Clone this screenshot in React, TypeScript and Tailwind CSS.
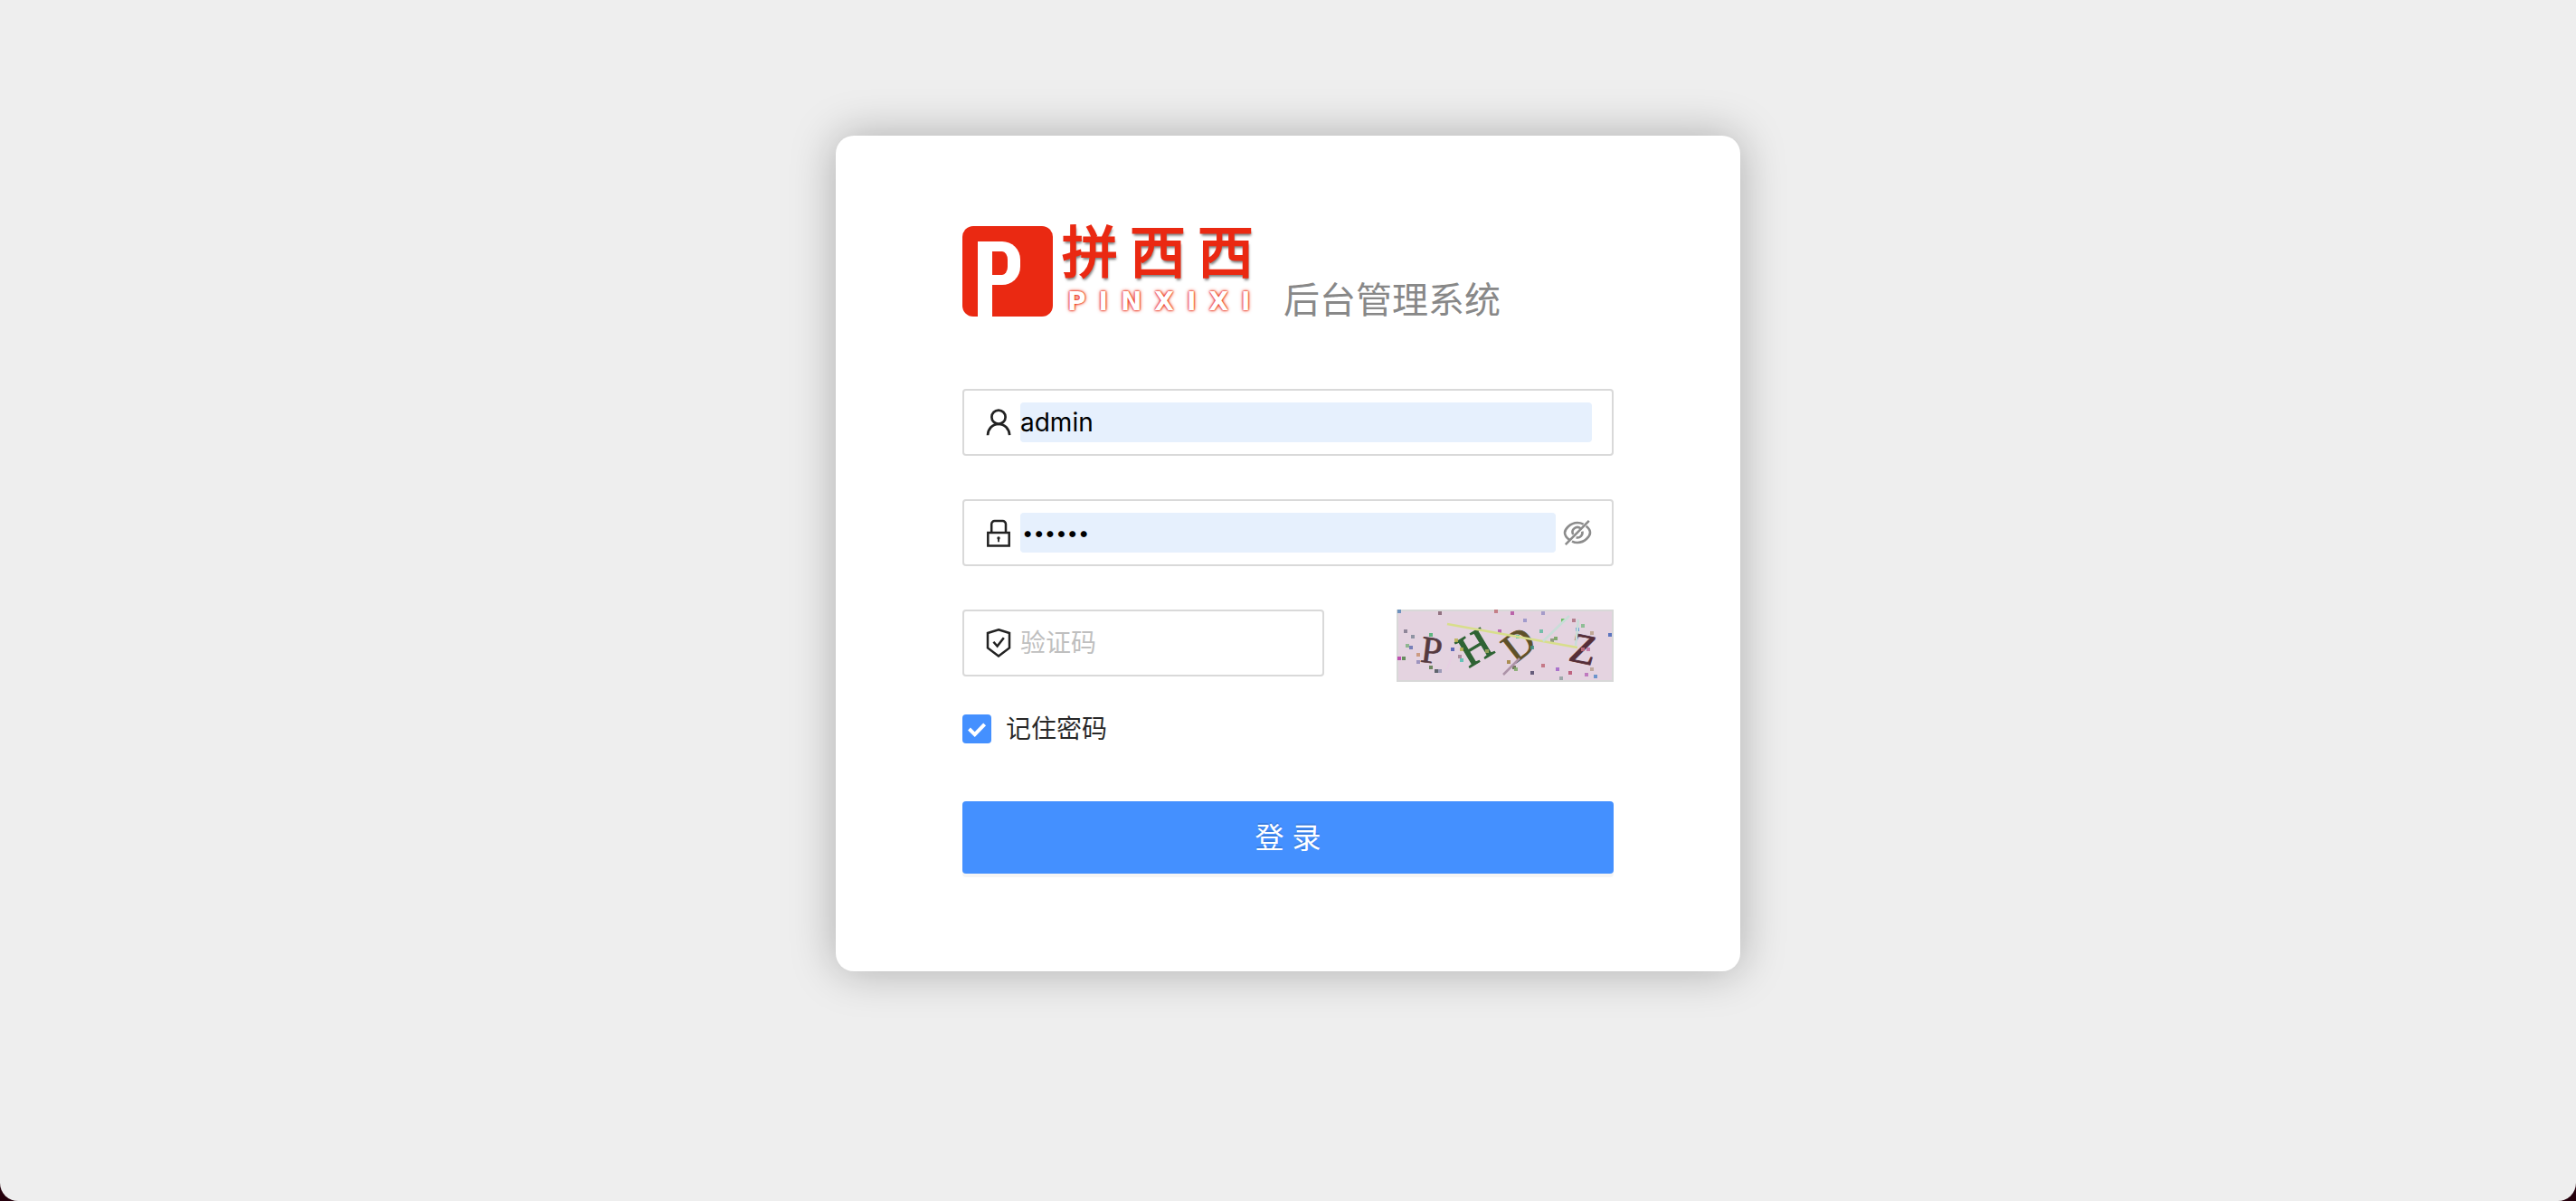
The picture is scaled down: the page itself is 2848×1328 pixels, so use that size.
import type { ReactNode } from "react";

const FONT = "font-['Inter','Noto_Sans_CJK_SC',sans-serif]";

function UserIcon() {
  return (
    <svg viewBox="0 0 32 32" className="size-8 shrink-0" fill="none" stroke="#222" strokeWidth="2.7" aria-hidden="true">
      <circle cx="16" cy="10.2" r="7.6" />
      <path d="M4 30.2C4.400 23 9.400 17.800 16 17.800S27.700 23 28.200 30.200" />
    </svg>
  );
}

function LockIcon() {
  return (
    <svg viewBox="0 0 32 32" className="size-8 shrink-0" fill="none" stroke="#222" strokeWidth="2.5" aria-hidden="true">
      <path d="M8.200 16V6.500a3.500 3.500 0 0 1 3.500-3.500h8.800a3.500 3.500 0 0 1 3.500 3.500V16" />
      <rect x="4.300" y="16" width="23.400" height="14.500" />
      <circle cx="16" cy="22" r="1.700" fill="#222" stroke="none" />
      <path d="M16 22v4.200" strokeWidth="1.800" />
    </svg>
  );
}

function ShieldIcon() {
  return (
    <svg viewBox="0 0 32 32" className="size-8 shrink-0" fill="none" stroke="#222" strokeWidth="2.5" aria-hidden="true">
      <path d="M16 1.300L28 5V21.400L16 30.500L4 21.400V5Z" />
      <path d="M10.400 14.800l4.200 4.800 7.200-9.400" />
    </svg>
  );
}

function EyeOffIcon() {
  return (
    <svg viewBox="0 0 32 32" className="size-8" fill="none" stroke="#8c8c8c" strokeWidth="2.6" aria-hidden="true">
      <path d="M22.6 6.6C20.8 5.7 18.600 5 16 5 7.500 5 2 12.500 2 16c0 2.500 2 5.600 5.200 7.900M10 25.600c1.800.9 3.800 1.400 6 1.400 8.500 0 14-7.500 14-11 0-2.300-1.600-5-4.400-7.200" />
      <path d="M19.400 11.300A5.400 5.400 0 0 0 11.200 18M14.600 21.200A5.400 5.400 0 0 0 21.300 14.600" />
      <path d="M2.800 29.200L28.800 2.800" />
    </svg>
  );
}

function Field({ icon, children, suffix }: { icon: ReactNode; children: ReactNode; suffix?: ReactNode }) {
  return (
    <div className="flex w-full min-w-0 items-center gap-2 rounded-sm border-2 border-[#d9d9d9] bg-white px-[22px] py-[13px]">
      {icon}
      {children}
      {suffix}
    </div>
  );
}

function Logo() {
  return (
    <div className="flex gap-2.5">
      <div className="flex size-[100px] items-start rounded-xl bg-[#ea2912] pt-[17px] pl-[17px]" aria-hidden="true">
        <span className="h-[83px] w-4 bg-white" />
        <span className="h-12 w-[31px] rounded-r-[20px] border-y-[11px] border-r-[14px] border-white" />
      </div>
      <div className="flex flex-col text-[#ea2912]">
        <span className="text-[62px] leading-[60px] tracking-[13px] [-webkit-text-stroke:2px_#ea2912] [text-shadow:1px_3px_3px_#0008]">
          拼西西
        </span>
        <span className="pt-2 pl-1.5 font-['DejaVu_Sans'] text-[28px] leading-8 font-bold tracking-[14px] text-white [text-shadow:0_0_2px_#ea2912,0_0_2px_#ea2912,0_0_4px_#ea2912]">
          PINXIXI
        </span>
      </div>
    </div>
  );
}

const DOTS: [number, number, string][] = [
  [3, 2, "#5a86b8"], [48, 4, "#846070"], [110, 2, "#c07078"], [128, 4, "#b350a0"], [162, 4, "#9a90c4"],
  [142, 12, "#9590c8"], [184, 12, "#58bc50"], [196, 12, "#ae7080"], [206, 18, "#80ba88"], [10, 24, "#80788c"],
  [114, 24, "#b050a8"], [160, 24, "#60b8a0"], [200, 22, "#4888d0"], [216, 26, "#baa088"], [236, 28, "#4464b8"],
  [18, 30, "#808898"], [38, 28, "#48b070"], [134, 30, "#40c898"], [176, 32, "#70a058"], [172, 34, "#80906c"],
  [12, 40, "#80b080"], [16, 42, "#6470b0"], [62, 44, "#4858b0"], [72, 44, "#b8b050"], [150, 42, "#409080"],
  [206, 44, "#c87080"], [212, 44, "#c070a0"], [24, 50, "#c89070"], [70, 52, "#a08090"], [3, 54, "#b838a8"],
  [8, 54, "#508048"], [24, 58, "#9088b8"], [72, 56, "#50c0b0"], [124, 58, "#a08038"], [162, 62, "#c06878"],
  [38, 64, "#587848"], [130, 64, "#606848"], [132, 66, "#80a868"], [178, 66, "#a060c8"], [216, 66, "#b8a090"],
  [44, 68, "#485058"], [48, 68, "#9090b0"], [150, 70, "#504868"], [192, 70, "#b85070"], [210, 72, "#b868b8"],
  [182, 76, "#90a0a0"], [220, 74, "#5888c8"], [100, 46, "#a0a860"], [66, 34, "#b8b050"],
];

function Captcha() {
  return (
    <svg viewBox="0 0 240 80" className="block h-20 w-60" role="img" aria-label="PHDZ" fontFamily="'Liberation Serif', serif">
      <rect width="240" height="80" fill="#d8d8d8" />
      <rect x="2" y="2" width="236" height="76" fill="#e4d3e0" />
      <path d="M64 45L55 68" stroke="#e6cfe2" strokeWidth="2" />
      <g textAnchor="middle">
        <text transform="translate(37 59) rotate(7)" fontSize="42" fill="#563a40" stroke="#563a40" strokeWidth=".6">P</text>
        <text transform="translate(95 56) rotate(-31)" fontSize="49" fill="#2f6334" stroke="#2f6334" strokeWidth="1.200">H</text>
        <text transform="translate(144 50) rotate(-38)" fontSize="45" fill="#5e5028" stroke="#5e5028" strokeWidth=".8">D</text>
        <text transform="translate(203 59) rotate(12)" fontSize="47" fill="#562e38" stroke="#562e38" strokeWidth=".8">Z</text>
      </g>
      {DOTS.map(([x, y, color]) => (
        <rect key={`${x}-${y}`} x={x - 2} y={y - 2} width="4" height="4" fill={color} opacity="0.85" />
      ))}
      <g fill="none" strokeWidth="2.500">
        <path d="M56 16L200 42" stroke="#d8de8c" />
        <path d="M191 7L162 35M201 11L198 40" stroke="#c8ded8" />
        <path d="M118 72L136 54" stroke="#ad93a8" />
      </g>
    </svg>
  );
}

export default function App() {
  return (
    <div className="min-h-screen bg-[#25000c]">
      <main className={`flex min-h-screen items-start justify-center rounded-b-[20px] bg-[#eee] pt-[150px] text-[28px] leading-[44px] text-black/85 ${FONT}`}>
        <form
          className="w-full max-w-[1000px] rounded-[20px] bg-white px-[140px] pt-[100px] pb-[108px] shadow-[0_0_50px_rgba(0,0,0,0.28)]"
          onSubmit={(e) => e.preventDefault()}
        >
          <header className="flex items-end justify-start gap-5">
            <Logo />
            <h1 className="text-[40px] leading-9 text-[#888]">后台管理系统</h1>
          </header>

          <div className="mt-20 flex flex-col gap-12">
            <Field icon={<UserIcon />}>
              <input aria-label="用户名" defaultValue="admin" className="h-11 min-w-0 flex-1 rounded-sm bg-[#e6f0fd] text-black outline-none" />
            </Field>
            <Field
              icon={<LockIcon />}
              suffix={
                <button type="button" aria-label="显示密码">
                  <EyeOffIcon />
                </button>
              }
            >
              <input
                type="password"
                aria-label="密码"
                defaultValue="123456"
                className="h-11 min-w-0 flex-1 rounded-sm bg-[#e6f0fd] pl-0.5 text-[22px] text-black outline-none"
              />
            </Field>
            <div className="flex items-start justify-between gap-20">
              <Field icon={<ShieldIcon />}>
                <input aria-label="验证码" placeholder="验证码" className="h-11 min-w-0 flex-1 outline-none placeholder:text-[#bfbfbf]" />
              </Field>
              <button type="button" aria-label="刷新验证码" className="shrink-0">
                <Captcha />
              </button>
            </div>
          </div>

          <label className="mt-[30px] flex w-fit items-center gap-4">
            <span className="grid size-8 place-items-center">
              <input type="checkbox" defaultChecked className="col-start-1 row-start-1 size-8 appearance-none rounded-sm bg-[#4490ff]" />
              <svg viewBox="0 0 32 32" className="pointer-events-none col-start-1 row-start-1 size-8" fill="none" stroke="#fff" strokeWidth="4" aria-hidden="true">
                <path d="M7.500 16l6.200 6.200L24.600 10.800" />
              </svg>
            </span>
            记住密码
          </label>

          <button
            type="submit"
            className="mt-[58px] h-20 w-full rounded-sm bg-[#4490ff] pt-0.5 text-[32px] text-white shadow-[0_4px_0_rgba(0,0,0,0.04)] [text-shadow:0_-2px_0_rgba(0,0,0,0.12)]"
          >
            登 录
          </button>
        </form>
      </main>
    </div>
  );
}
